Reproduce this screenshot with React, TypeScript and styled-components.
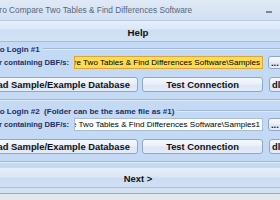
import React from 'react';
import styled, { createGlobalStyle } from 'styled-components';

const GlobalStyle = createGlobalStyle`
  html, body {
    margin: 0;
    padding: 0;
    background: #c4d9f3;
  }
`;

const Viewport = styled.div`
  width: 280px;
  height: 200px;
  overflow: hidden;
  background: #c4d9f3;
  font-family: 'Liberation Sans', Arial, sans-serif;
`;

const Window = styled.div`
  width: 440px;
  margin-left: -82px;
  display: flex;
  flex-direction: column;
`;

const TitleBar = styled.div`
  height: 20px;
  display: flex;
  align-items: center;
  padding-left: 62px;
  background: linear-gradient(#e0eaf6, #d2e0f2);
  box-sizing: border-box;
`;

const TitleText = styled.span`
  font-size: 8.3px;
  color: #56667e;
  white-space: nowrap;
`;

const CaptionButtons = styled.div`
  margin-left: auto;
  display: flex;
  height: 100%;
  padding-right: 2px;
`;

const CaptionButton = styled.div<{ $w: number }>`
  width: ${p => p.$w}px;
  display: flex;
  align-items: center;
  justify-content: center;
  padding-top: 3px;
  box-sizing: border-box;
`;

const MinGlyph = styled.span`
  width: 6px;
  height: 2px;
  background: #7b8595;
`;

const MenuBar = styled.div`
  height: 22px;
  display: flex;
  align-items: center;
  justify-content: center;
  padding-top: 2px;
  box-sizing: border-box;
  border-top: 1px solid #b3c9e6;
  border-bottom: 1px solid #a3bcdc;
  background: linear-gradient(#e6eff9 0%, #dbe7f6 40%, #cddef3 45%, #d3e2f5 100%);
  font-size: 9.7px;
  font-weight: bold;
  color: #111;
`;

const Body = styled.div`
  padding: 1px 0 0 52px;
  display: flex;
  flex-direction: column;
  gap: 5px;
`;

const Group = styled.div`
  width: 330px;
  display: flex;
  flex-direction: column;
  box-sizing: border-box;
  border-left: 1px solid #a0b8d8;
  border-right: 1px solid #a0b8d8;
  border-bottom: 1px solid #a0b8d8;
  box-shadow: 0 1px 0 #e2ecf8;
  padding: 0 7px 7px 7px;
`;

const LegendRow = styled.div`
  height: 12px;
  display: flex;
  align-items: center;
  margin: 0 -7px;
`;

const LegendLine = styled.span<{ $grow?: boolean }>`
  height: 0;
  border-top: 1px solid #a0b8d8;
  border-bottom: 1px solid #e2ecf8;
  ${p => (p.$grow ? 'flex: 1;' : 'width: 4px;')}
`;

const LegendText = styled.span`
  padding: 0 3px 0 2px;
  font-size: 8px;
  font-weight: bold;
  color: #1b2f66;
  white-space: pre;
`;

const FieldRow = styled.div`
  margin-top: 1px;
  height: 13px;
  display: flex;
  align-items: stretch;
  gap: 5px;
`;

const Label = styled.div`
  width: 91px;
  flex-shrink: 0;
  display: flex;
  justify-content: flex-end;
  align-items: center;
  overflow: hidden;
  font-size: 7.6px;
  font-weight: bold;
  color: #1b2f66;
  white-space: nowrap;
`;

const PathBox = styled.div<{ $focused?: boolean }>`
  width: 189px;
  flex-shrink: 0;
  box-sizing: border-box;
  display: flex;
  align-items: center;
  justify-content: flex-end;
  padding: 0 2px;
  overflow: hidden;
  white-space: nowrap;
  font-size: 8.1px;
  color: #000;
  background: ${p => (p.$focused ? '#ffdb52' : '#ffffff')};
  border: 1px solid ${p => (p.$focused ? '#d8a63c' : '#a9bdd9')};
`;

const ButtonRow = styled.div`
  margin-top: 8px;
  height: 15px;
  display: flex;
  gap: 4px;
`;

const Button = styled.div<{ $w: number; $ml?: number }>`
  width: ${p => p.$w}px;
  margin-left: ${p => p.$ml ?? 0}px;
  flex-shrink: 0;
  box-sizing: border-box;
  display: flex;
  align-items: center;
  justify-content: center;
  overflow: hidden;
  white-space: nowrap;
  border: 1px solid #8fa6c7;
  border-radius: 3px;
  background: linear-gradient(#f5f8fd 0%, #e9f0f9 48%, #dbe6f5 52%, #e3ecf8 100%);
  font-size: 9.4px;
  font-weight: bold;
  color: #111;
`;

const SmallButton = styled(Button)`
  justify-content: flex-start;
  padding-left: 2px;
`;

const NextBar = styled.div`
  margin-top: 6px;
  height: 20px;
  display: flex;
  align-items: center;
  justify-content: center;
  padding-top: 1px;
  box-sizing: border-box;
  border-top: 1px solid #e6eef9;
  border-bottom: 1px solid #a9bfdc;
  background: linear-gradient(#e3edf9 0%, #d9e6f6 45%, #cbdcf2 50%, #d1e1f4 100%);
  font-size: 9.4px;
  font-weight: bold;
  color: #111;
`;

const BottomFrame = styled.div`
  height: 5px;
  background: #d3e1f3;
  border-bottom: 1px solid #9aabc2;
`;

const FrameEdge = styled.div`
  height: 6px;
  background: #e3e8ef;
`;

const PATH = 'C:\\Program Files (x86)\\Sobolsoft\\FoxPro Compare Two Tables & Find Differences Software\\Samples';

interface LoginProps {
  legend: string;
  path: string;
  focused?: boolean;
}

const LoginGroup: React.FC<LoginProps> = ({ legend, path, focused }) => (
  <Group>
    <LegendRow>
      <LegendLine />
      <LegendText>{legend}</LegendText>
      <LegendLine $grow />
    </LegendRow>
    <FieldRow>
      <Label>Folder containing DBF/s:</Label>
      <PathBox $focused={focused}>{path}</PathBox>
      <SmallButton $w={25}>...</SmallButton>
    </FieldRow>
    <ButtonRow>
      <Button $w={160}>Load Sample/Example Database</Button>
      <Button $w={121}>Test Connection</Button>
      <SmallButton $w={24} $ml={2}>dll</SmallButton>
    </ButtonRow>
  </Group>
);

const App: React.FC = () => (
  <Viewport>
    <GlobalStyle />
    <Window>
      <TitleBar>
        <TitleText>FoxPro Compare Two Tables &amp; Find Differences Software</TitleText>
        <CaptionButtons>
          <CaptionButton $w={26}>
            <MinGlyph />
          </CaptionButton>
          <CaptionButton $w={27} />
          <CaptionButton $w={47} />
        </CaptionButtons>
      </TitleBar>
      <MenuBar>Help</MenuBar>
      <Body>
        <LoginGroup legend="FoxPro Login #1" path={PATH} focused />
        <LoginGroup legend="FoxPro Login #2  (Folder can be the same file as #1)" path={PATH + '1'} />
      </Body>
      <NextBar>Next &gt;</NextBar>
      <BottomFrame />
      <FrameEdge />
    </Window>
  </Viewport>
);

export default App;
